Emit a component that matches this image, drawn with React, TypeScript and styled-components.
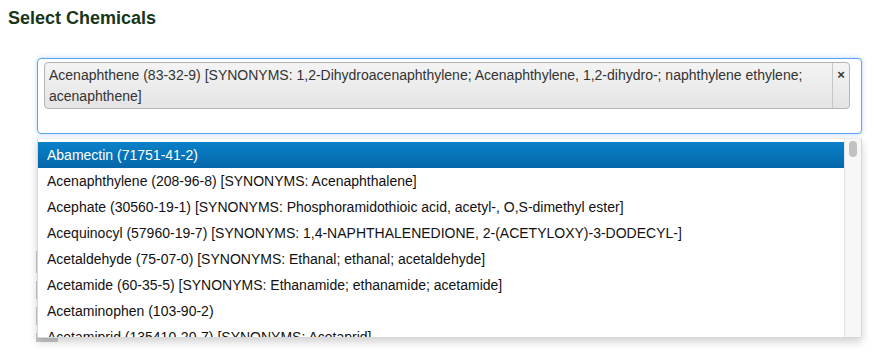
import styled, { createGlobalStyle } from "styled-components";

const GlobalStyle = createGlobalStyle`
  body {
    margin: 0;
    background: #fff;
    font-family: "Liberation Sans", Arial, sans-serif;
    color: #333;
  }
`;

const Page = styled.div`
  padding: 8px;
`;

const Title = styled.h2`
  margin: 0;
  font-size: 18px;
  font-weight: 700;
  line-height: 20px;
  color: #17361a;
`;

const Field = styled.div`
  width: 825px;
  margin: 30px 0 0 29px;
`;

const SelectWrap = styled.div`
  position: relative;
  z-index: 2;
`;

const SelectBox = styled.div`
  box-sizing: border-box;
  min-height: 76px;
  padding: 3px 11px 3px 6px;
  border: 1px solid #5ea4f0;
  border-radius: 4px;
  box-shadow: 0 0 5px rgba(82, 168, 236, 0.45);
  background: #fff;
`;

const Tag = styled.div`
  position: relative;
  box-sizing: border-box;
  padding: 2px 30px 1px 4px;
  border: 1px solid #b4b4b4;
  border-radius: 4px;
  background: linear-gradient(#f4f4f4, #e4e4e4);
  font-size: 14px;
  line-height: 21px;
  color: #333;
`;

const Remove = styled.span`
  position: absolute;
  top: 0;
  right: 0;
  bottom: 0;
  width: 16px;
  border-left: 1px solid #c6c6c6;
  text-align: center;
  font-size: 13px;
  font-weight: 700;
  line-height: 24px;
  color: #333;
`;

const Stubs = styled.div`
  display: flex;
  flex-direction: column;
  gap: 8px;
  width: 22px;
  margin: 117px 0 0 -1px;
`;

const Stub = styled.div<{ $h: number }>`
  height: ${(p) => p.$h}px;
  background: #c9c9c9;
`;

const Dropdown = styled.div`
  position: absolute;
  top: calc(100% + 4px);
  left: 0;
  right: 0;
  box-sizing: border-box;
  height: 200px;
  display: flex;
  border: 1px solid #d8d8d8;
  border-top: 1px solid #ececec;
  border-radius: 2px;
  background: #fff;
  box-shadow: 0 4px 8px rgba(0, 0, 0, 0.18);
  overflow: hidden;
`;

const List = styled.ul`
  flex: 1;
  margin: 0;
  padding: 3px 0 0;
  list-style: none;
`;

const Option = styled.li<{ $active?: boolean }>`
  height: 26px;
  padding: 0 9px;
  font-size: 14px;
  line-height: 26px;
  white-space: nowrap;
  color: ${(p) => (p.$active ? "#fff" : "#111")};
  background: ${(p) =>
    p.$active ? "linear-gradient(#0a81c9, #0567a9)" : "transparent"};
`;

const Track = styled.div`
  width: 14px;
  padding: 2px 1px;
  border-left: 1px solid #e3e3e3;
  background: #f7f7f7;
`;

const Thumb = styled.div`
  width: 8px;
  height: 16px;
  margin: 0 auto;
  border-radius: 4px;
  background: #c2c2c2;
`;

const options = [
  "Abamectin (71751-41-2)",
  "Acenaphthylene (208-96-8) [SYNONYMS: Acenaphthalene]",
  "Acephate (30560-19-1) [SYNONYMS: Phosphoramidothioic acid, acetyl-, O,S-dimethyl ester]",
  "Acequinocyl (57960-19-7) [SYNONYMS: 1,4-NAPHTHALENEDIONE, 2-(ACETYLOXY)-3-DODECYL-]",
  "Acetaldehyde (75-07-0) [SYNONYMS: Ethanal; ethanal; acetaldehyde]",
  "Acetamide (60-35-5) [SYNONYMS: Ethanamide; ethanamide; acetamide]",
  "Acetaminophen (103-90-2)",
  "Acetamiprid (135410-20-7) [SYNONYMS: Acetaprid]",
];

export default function App() {
  return (
    <Page>
      <GlobalStyle />
      <Title>Select Chemicals</Title>
      <Field>
        <SelectWrap>
          <SelectBox>
            <Tag>
              Acenaphthene (83-32-9) [SYNONYMS: 1,2-Dihydroacenaphthylene;
              Acenaphthylene, 1,2-dihydro-; naphthylene ethylene; acenaphthene]
              <Remove>×</Remove>
            </Tag>
          </SelectBox>
          <Dropdown>
            <List>
              {options.map((o, i) => (
                <Option key={o} $active={i === 0}>
                  {o}
                </Option>
              ))}
            </List>
            <Track>
              <Thumb />
            </Track>
          </Dropdown>
        </SelectWrap>
        <Stubs>
          <Stub $h={22} />
          <Stub $h={18} />
          <Stub $h={18} />
          <Stub $h={9} />
        </Stubs>
      </Field>
    </Page>
  );
}
